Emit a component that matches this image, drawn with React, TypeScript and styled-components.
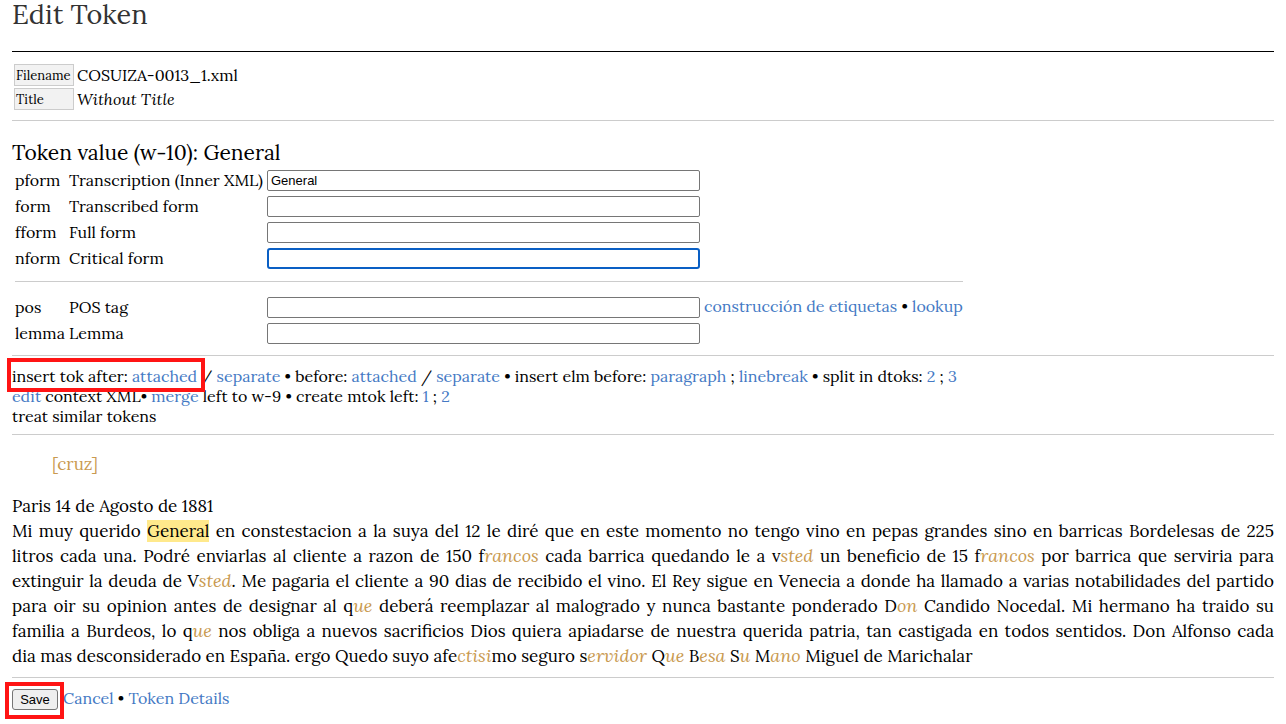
import React from "react";
import styled, { createGlobalStyle } from "styled-components";

const GlobalStyle = createGlobalStyle`
  * { box-sizing: border-box; }
  body {
    margin: 0;
    background: #fff;
    color: #000;
    font-family: Lora, "Liberation Serif", serif;
    font-size: 16px;
    line-height: 20px;
  }
`;

const Page = styled.main`
  padding: 0 12px 14px;
`;

const PageTitle = styled.h1`
  margin: 0;
  color: #333;
  font-size: 27px;
  font-weight: 400;
  line-height: 28px;
`;

const SectionTitle = styled.h2`
  margin: 0;
  font-size: 21px;
  font-weight: 400;
  line-height: 27px;
`;

const Rule = styled.hr<{ $above?: number; $below?: number; $dark?: boolean }>`
  height: 1px;
  margin: ${(p) => p.$above ?? 10}px 0 ${(p) => p.$below ?? 10}px;
  border: 0;
  background: ${(p) => (p.$dark ? "#000" : "#ccc")};
`;

const InfoTable = styled.table`
  border-collapse: separate;
  border-spacing: 2px;

  th {
    min-width: 60px;
    height: 22px;
    padding: 1px 1px 0;
    border: 1px solid #ccc;
    background: #f2f2f2;
    font-size: 13px;
    line-height: 19px;
    font-weight: 400;
    text-align: left;
  }

  td {
    padding: 0 1px;
  }
`;

const FieldTable = styled.table`
  border-collapse: separate;
  border-spacing: 2px;

  td,
  th {
    padding: 0 1px;
    font-weight: 400;
    text-align: left;
    white-space: nowrap;
  }
`;

const FieldRow = styled.tr`
  height: 24px;
`;

const KeyCell = styled.th`
  min-width: 52px;
`;

const LabelCell = styled.td`
  min-width: 196px;
`;

const TextInput = styled.input`
  width: 433px;
  height: 21px;
  margin: 0 4px 0 0;
  padding: 1px 3px;
  border: 1px solid #767676;
  border-radius: 2px;
  background: #fff;
  font: 13px/15px "Liberation Sans", Arial, sans-serif;
  vertical-align: middle;

  &:focus {
    border: 2px solid #0a5fc4;
    border-radius: 3px;
    padding: 0 2px;
    outline: none;
  }
`;

const Link = styled.a`
  color: #4479c4;
  text-decoration: none;
`;

const Actions = styled.div`
  white-space: nowrap;
`;

const Marked = styled.span<{ $inset: string }>`
  position: relative;
  display: inline-block;

  &::after {
    content: "";
    position: absolute;
    inset: ${(p) => p.$inset};
    border: 4px solid #ff1414;
    pointer-events: none;
  }
`;

const Transcript = styled.article`
  font-size: 17px;
  line-height: 25px;
`;

const Note = styled.p`
  margin: 0 0 17px 40px;
  color: #c99a50;
`;

const Passage = styled.p`
  margin: 0;
`;

const Line = styled.span<{ $short?: boolean }>`
  display: block;
  text-align: justify;
  text-align-last: ${(p) => (p.$short ? "left" : "justify")};
`;

const Expansion = styled.em`
  color: #c99a50;
  font-size: 18px;
  line-height: 20px;
`;

const Highlight = styled.mark`
  background: #ffe98c;
  color: inherit;
`;

const SaveButton = styled.button`
  display: block;
  width: 46px;
  height: 21px;
  margin: 1px 0 0;
  padding: 0;
  border: 1px solid #767676;
  border-radius: 3px;
  background: #efefef;
  color: #000;
  font: 13px/15px "Liberation Sans", Arial, sans-serif;
`;

const Footer = styled.footer`
  display: flex;
  align-items: flex-start;
  gap: 5px;
`;

type FieldProps = { name: string; label: string; value?: string; focus?: boolean; children?: React.ReactNode };

const Field = ({ name, label, value, focus, children }: FieldProps) => (
  <FieldRow>
    <KeyCell scope="row">{name}</KeyCell>
    <LabelCell>
      <label htmlFor={name}>{label}</label>
    </LabelCell>
    <td>
      <TextInput id={name} name={name} type="text" defaultValue={value} autoFocus={focus} />
      {children}
    </td>
  </FieldRow>
);

const A = ({ children }: { children: React.ReactNode }) => <Link href="#">{children}</Link>;

export default function App() {
  return (
    <Page>
      <GlobalStyle />
      <PageTitle>Edit Token</PageTitle>
      <Rule $dark $above={23} />
      <InfoTable>
        <tbody>
          <tr>
            <th scope="row">Filename</th>
            <td>COSUIZA-0013_1.xml</td>
          </tr>
          <tr>
            <th scope="row">Title</th>
            <td>
              <i>Without Title</i>
            </td>
          </tr>
        </tbody>
      </InfoTable>
      <Rule $above={8} $below={18} />

      <form onSubmit={(e) => e.preventDefault()}>
        <SectionTitle>Token value (w-10): General</SectionTitle>
        <FieldTable>
          <tbody>
            <Field name="pform" label="Transcription (Inner XML)" value="General" />
            <Field name="form" label="Transcribed form" />
            <Field name="fform" label="Full form" />
            <Field name="nform" label="Critical form" focus />
            <tr>
              <td colSpan={3}>
                <Rule $above={9} $below={11} />
              </td>
            </tr>
            <Field name="pos" label="POS tag">
              <A>construcción de etiquetas</A> • <A>lookup</A>
            </Field>
            <Field name="lemma" label="Lemma" />
          </tbody>
        </FieldTable>
        <Rule $above={8} />

        <Actions>
          <div>
            <Marked $inset="-8px -8px -6px -5px">
              insert tok after: <A>attached</A>
            </Marked>{" "}
            / <A>separate</A> • before: <A>attached</A> / <A>separate</A> • insert elm before: <A>paragraph</A> ;{" "}
            <A>linebreak</A> • split in dtoks: <A>2</A> ; <A>3</A>
          </div>
          <div>
            <A>edit</A> context XML• <A>merge</A> left to w-9 • create mtok left: <A>1</A> ; <A>2</A>
          </div>
          <div>treat similar tokens</div>
        </Actions>
        <Rule $above={8} $below={17} />

        <Transcript lang="es">
          <Note>[cruz]</Note>
          <Passage>
            <Line $short>Paris 14 de Agosto de 1881</Line>
            <Line>
              Mi muy querido <Highlight>General</Highlight> en constestacion a la suya del 12 le diré que en este
              momento no tengo vino en pepas grandes sino en barricas Bordelesas de 225
            </Line>
            <Line>
              litros cada una. Podré enviarlas al cliente a razon de 150 f<Expansion>rancos</Expansion> cada barrica
              quedando le a v<Expansion>sted</Expansion> un beneficio de 15 f<Expansion>rancos</Expansion> por barrica
              que serviria para
            </Line>
            <Line>
              extinguir la deuda de V<Expansion>sted</Expansion>. Me pagaria el cliente a 90 dias de recibido el vino.
              El Rey sigue en Venecia a donde ha llamado a varias notabilidades del partido
            </Line>
            <Line>
              para oir su opinion antes de designar al q<Expansion>ue</Expansion> deberá reemplazar al malogrado y nunca
              bastante ponderado D<Expansion>on</Expansion> Candido Nocedal. Mi hermano ha traido su
            </Line>
            <Line>
              familia a Burdeos, lo q<Expansion>ue</Expansion> nos obliga a nuevos sacrificios Dios quiera apiadarse de
              nuestra querida patria, tan castigada en todos sentidos. Don Alfonso cada
            </Line>
            <Line $short>
              dia mas desconsiderado en España. ergo Quedo suyo afe<Expansion>ctisi</Expansion>mo seguro s
              <Expansion>ervidor</Expansion> Q<Expansion>ue</Expansion> B<Expansion>esa</Expansion> S
              <Expansion>u</Expansion> M<Expansion>ano</Expansion> Miguel de Marichalar
            </Line>
          </Passage>
        </Transcript>
        <Rule $above={8} />

        <Footer>
          <Marked $inset="-6px -6px -9px -7px">
            <SaveButton type="submit">Save</SaveButton>
          </Marked>
          <span>
            <A>Cancel</A> • <A>Token Details</A>
          </span>
        </Footer>
      </form>
    </Page>
  );
}
